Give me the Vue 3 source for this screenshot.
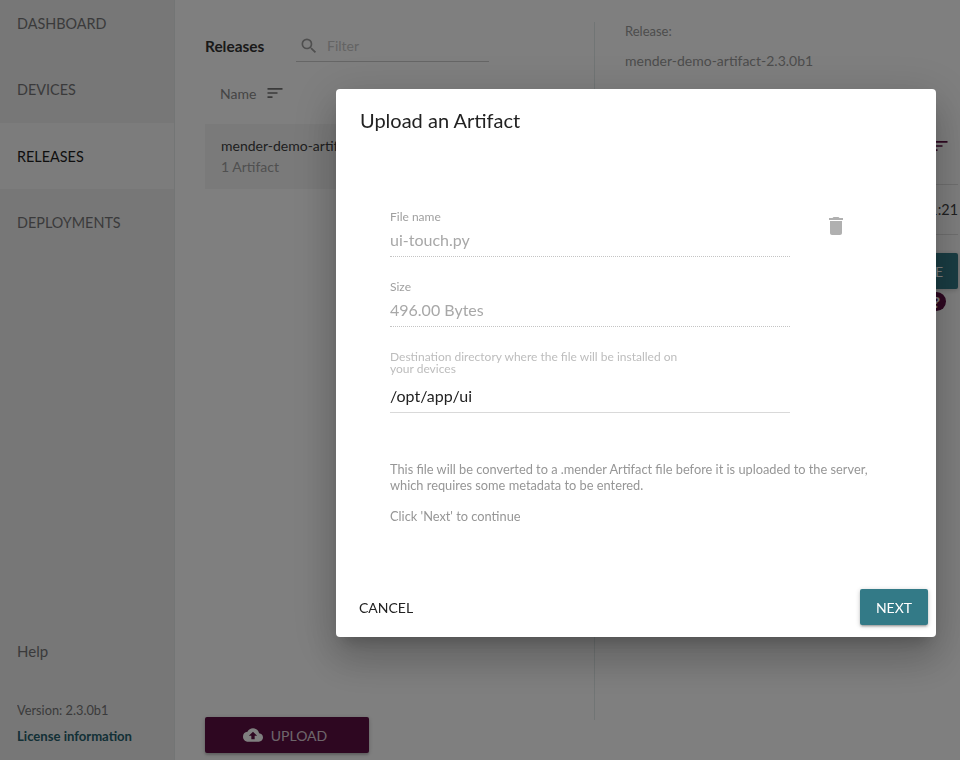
<script setup>
const navItems = [
  { label: 'DASHBOARD', active: false },
  { label: 'DEVICES', active: false },
  { label: 'RELEASES', active: true },
  { label: 'DEPLOYMENTS', active: false },
]
</script>

<template>
  <div class="page">
    <aside class="sidebar">
      <nav class="nav">
        <div v-for="item in navItems" :key="item.label" class="nav-item" :class="{ active: item.active }">{{ item.label }}</div>
      </nav>
      <div class="side-foot">
        <div class="help">Help</div>
        <div class="version">Version: 2.3.0b1</div>
        <div class="license">License information</div>
      </div>
    </aside>

    <main class="main">
      <section class="list-col">
        <div class="list-head">
          <span class="list-title">Releases</span>
          <div class="filter">
            <svg class="search" viewBox="0 0 24 24" width="20" height="20"><path fill="#9e9e9e" d="M15.5 14h-.79l-.28-.27A6.47 6.47 0 0 0 16 9.5 6.5 6.5 0 1 0 9.5 16c1.61 0 3.09-.59 4.23-1.57l.27.28v.79l5 4.99L20.49 19l-4.99-5zm-6 0C7.01 14 5 11.99 5 9.5S7.01 5 9.5 5 14 7.01 14 9.5 11.99 14 9.5 14z"/></svg>
            <span class="filter-text">Filter</span>
          </div>
        </div>
        <div class="sort-row">
          <span>Name</span>
          <svg viewBox="0 0 24 24" width="20" height="20"><path fill="#757575" d="M3 18h6v-2H3v2zM3 6v2h18V6H3zm0 7h12v-2H3v2z"/></svg>
        </div>
        <div class="release-row">
          <div class="release-name">mender-demo-artifact-2.3.0b1</div>
          <div class="release-count">1 Artifact</div>
        </div>
        <button class="upload">
          <svg viewBox="0 0 24 24" width="20" height="20"><path fill="#fff" d="M19.35 10.04A7.49 7.49 0 0 0 12 4C9.11 4 6.6 5.64 5.35 8.04A5.994 5.994 0 0 0 0 14c0 3.31 2.69 6 6 6h13c2.76 0 5-2.24 5-5 0-2.64-2.05-4.78-4.65-4.96zM14 13v4h-4v-4H7l5-5 5 5h-3z"/></svg>
          <span>UPLOAD</span>
        </button>
      </section>

      <section class="detail-col">
        <div class="detail-label">Release:</div>
        <div class="detail-value">mender-demo-artifact-2.3.0b1</div>
        <div class="detail-sort">
          <svg viewBox="0 0 24 24" width="20" height="20"><path fill="#5d0f43" d="M3 18h6v-2H3v2zM3 6v2h18V6H3zm0 7h12v-2H3v2z"/></svg>
        </div>
        <div class="detail-row">2019-11-04 11:21</div>
        <div class="detail-action">
          <button class="remove">REMOVE</button>
          <span class="qmark">?</span>
        </div>
      </section>
    </main>

    <div class="overlay"></div>

    <div class="dialog">
      <h2 class="dialog-title">Upload an Artifact</h2>
      <div class="dialog-body">
        <div class="file-row">
          <div class="fields">
            <div class="field">
              <div class="field-label">File name</div>
              <div class="field-value dotted">ui-touch.py</div>
            </div>
            <div class="field">
              <div class="field-label">Size</div>
              <div class="field-value dotted">496.00 Bytes</div>
            </div>
            <div class="field">
              <div class="field-label light">Destination directory where the file will be installed on<br>your devices</div>
              <div class="field-value editable">/opt/app/ui</div>
            </div>
          </div>
          <svg class="trash" viewBox="0 0 24 24" width="24" height="24"><path fill="#b0b0b0" d="M6 19c0 1.1.9 2 2 2h8c1.1 0 2-.9 2-2V7H6v12zM19 4h-3.5l-1-1h-5l-1 1H5v2h14V4z"/></svg>
        </div>
        <p class="note">This file will be converted to a .mender Artifact file before it is uploaded to the server,<br>which requires some metadata to be entered.</p>
        <p class="note next-note">Click 'Next' to continue</p>
      </div>
      <div class="dialog-actions">
        <button class="cancel">CANCEL</button>
        <button class="next">NEXT</button>
      </div>
    </div>
  </div>
</template>

<style>
html, body { margin: 0; padding: 0; }
</style>

<style scoped>
.page {
  width: 960px;
  height: 760px;
  display: flex;
  overflow: hidden;
  background: #fff;
  font-family: Lato, "Liberation Sans", sans-serif;
  color: #404041;
}
.sidebar {
  width: 174px;
  flex: none;
  height: 760px;
  display: flex;
  flex-direction: column;
  justify-content: space-between;
  background: #eeeeee;
  border-right: 1px solid #e6eaea;
}
.nav { margin-top: -10px; }
.nav-item {
  height: 66.4px;
  box-sizing: border-box;
  padding-left: 17px;
  display: flex;
  align-items: center;
  font-size: 14.4px;
  color: #58585a;
  opacity: .8;
}
.nav-item.active { opacity: 1; color: #1f1f1f; background: #f9f9f9; padding-top: 2px; }
.side-foot { padding: 0 0 16px 17px; }
.help { font-size: 15px; color: #58585a; opacity: .8; margin-bottom: 42px; line-height: 18px; }
.version { font-size: 12.8px; color: #58585a; opacity: .8; line-height: 16px; margin-bottom: 10px; }
.license { font-size: 13.1px; font-weight: 700; color: #26606c; line-height: 16px; }

.main { flex: 1; display: flex; min-width: 0; }
.list-col {
  width: 419px;
  flex: none;
  box-sizing: border-box;
  padding: 31px 0 0 30px;
  display: flex;
  flex-direction: column;
}
.list-head { display: flex; align-items: center; height: 30px; }
.list-title { font-size: 15.4px; font-weight: 700; color: #333; width: 91px; flex: none; }
.filter { display: flex; align-items: center; width: 193px; height: 30px; border-bottom: 1px solid #ccc; gap: 8px; }
.search { margin-left: 3px; }
.filter-text { font-size: 14px; color: #c8c8c8; }
.sort-row { display: flex; align-items: center; gap: 9px; margin: 17px 0 0 15px; height: 30px; font-size: 14px; color: #8a8a8a; }
.release-row { margin-top: 16px; height: 65px; width: 330px; box-sizing: border-box; padding: 13px 0 0 16px; background: #f5f5f5; white-space: nowrap; }
.release-name { font-size: 14px; line-height: 18px; color: #404041; }
.release-count { font-size: 14px; line-height: 18px; margin-top: 3px; color: #a0a0a0; }
.upload {
  margin-top: auto;
  margin-bottom: 7px;
  width: 164px;
  height: 36px;
  border: 0;
  border-radius: 2px;
  background: #5d0f43;
  color: rgba(255,255,255,.8);
  font: 14px Lato, sans-serif;
  display: flex;
  align-items: center;
  justify-content: center;
  gap: 8px;
  box-shadow: 0 1px 5px rgba(0,0,0,.2), 0 2px 2px rgba(0,0,0,.14);
  padding: 0 4px 0 0;
}
.detail-col {
  flex: 1;
  min-width: 0;
  box-sizing: border-box;
  margin: 22px 0 40px;
  padding: 0 2px 0 30px;
  border-left: 1px solid #e2eaea;
  white-space: nowrap;
}
.detail-label { font-size: 13px; line-height: 16px; color: #9a9a9a; margin-top: 1px; }
.detail-value { font-size: 14px; line-height: 18px; color: #9a9a9a; margin-top: 13px; }
.detail-sort { display: flex; justify-content: flex-end; height: 20px; margin-top: 66px; padding-right: 8px; }
.detail-row { margin-top: 28px; height: 49px; border-top: 1px solid #e0e0e0; border-bottom: 1px solid #e0e0e0; display: flex; align-items: center; justify-content: flex-end; font-size: 14.4px; color: #404041; }
.detail-action { position: relative; display: flex; justify-content: flex-end; margin-top: 18px; }
.remove { width: 88px; height: 36px; border: 0; border-radius: 2px; background: #337a87; color: #fff; font: 14px Lato, sans-serif; padding: 0; box-shadow: 0 1px 5px rgba(0,0,0,.2); }
.qmark { position: absolute; right: 12px; top: 39px; width: 19px; height: 19px; border-radius: 50%; background: #5d0f43; color: #fff; font-size: 16px; font-weight: 700; text-align: center; line-height: 19px; }

.overlay { position: fixed; inset: 0; background: rgba(0,0,0,.5); }

.dialog {
  position: fixed;
  left: 336px;
  top: 89px;
  width: 600px;
  height: 548px;
  background: #fff;
  border-radius: 4px;
  display: flex;
  flex-direction: column;
  box-shadow: 0 11px 15px -7px rgba(0,0,0,.2), 0 24px 38px 3px rgba(0,0,0,.14), 0 9px 46px 8px rgba(0,0,0,.12);
}
.dialog-title { margin: 0; padding: 18px 24px 0; font-size: 20px; line-height: 26px; font-weight: 400; color: #222; }
.dialog-body { padding: 78px 54px 0; flex: 1; }
.file-row { display: flex; align-items: flex-start; }
.fields { width: 400px; flex: none; }
.field { margin-bottom: 24px; }
.field-label { font-size: 12px; line-height: 12px; color: #a0a0a0; }
.field-label.light { color: #bdbdbd; }
.field-value { font-size: 16px; line-height: 20px; padding: 7px 0 6px; color: #a8a8a8; }
.dotted { border-bottom: 1px dotted #c4c4c4; }
.editable { color: #222; border-bottom: 1px solid #d9d9d9; padding-top: 11px; }
.trash { margin: 3px 0 0 34px; }
.note { margin: 0; font-size: 12.8px; line-height: 16px; color: #969696; width: 490px; }
.file-row + .note { margin-top: 24px; }
.next-note { margin-top: 15px; }
.dialog-actions { display: flex; justify-content: space-between; align-items: center; padding: 0 8px 12px 8px; }
.cancel { height: 36px; padding: 0 15px; border: 0; background: none; font: 14px Lato, sans-serif; color: #222; }
.next { width: 68px; height: 36px; padding: 0; border: 0; border-radius: 2px; background: #337a87; color: #fff; font: 14px Lato, sans-serif; box-shadow: 0 1px 5px rgba(0,0,0,.2), 0 2px 2px rgba(0,0,0,.14), 0 3px 1px -2px rgba(0,0,0,.12); }
</style>
